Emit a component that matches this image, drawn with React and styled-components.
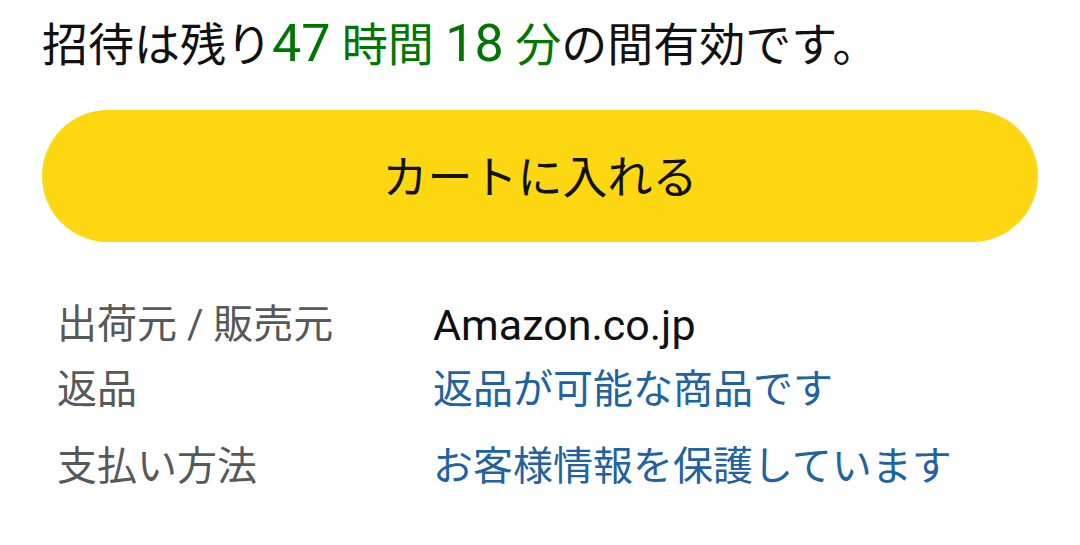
import React from "react";
import styled, { createGlobalStyle } from "styled-components";

const Global = createGlobalStyle`
  body{
    margin:0;
    background:#fff;
    font-family: Roboto, "Noto Sans CJK JP", sans-serif;
  }
`;

const App = () => {
  return (
    <Wrapper>
      <Global />
      <Notice>
        招待は残り<Green><Num>47</Num> 時間 <Num>18</Num> 分</Green>の間有効です。
      </Notice>
      <CartButton>カートに入れる</CartButton>
      <Details>
        <Row>
          <Label>出荷元 / 販売元</Label>
          <Value latin>Amazon.co.jp</Value>
        </Row>
        <Row>
          <Label>返品</Label>
          <Value link>返品が可能な商品です</Value>
        </Row>
        <Row extra>
          <Label>支払い方法</Label>
          <Value link>お客様情報を保護しています</Value>
        </Row>
      </Details>
    </Wrapper>
  );
};
export default App;

const Wrapper = styled.div`
  width:1080px;
  height:545px;
  padding:17px 42px 0 42px;
  box-sizing:border-box;
  overflow:hidden;
`;

const Notice = styled.p`
  margin:0;
  font-size:46px;
  line-height:56px;
  color:#111;
  white-space:nowrap;
`;

const Green = styled.span`
  color:#007600;
`;

const Num = styled.span`
  font-size:52px;
  line-height:0;
`;

const CartButton = styled.button`
  display:flex;
  align-items:center;
  justify-content:center;
  width:996px;
  height:132px;
  margin-top:37px;
  padding:0 0 4px 0;
  border:none;
  border-radius:66px;
  background:#fdd812;
  color:#111;
  font-family:inherit;
  font-size:45px;
  cursor:pointer;
`;

const Details = styled.div`
  margin-top:50px;
  padding-left:15px;
`;

const Row = styled.div`
  display:grid;
  grid-template-columns:376px 1fr;
  align-items:center;
  height:65px;
  margin-top:${p => (p.extra ? "12px" : "0")};
`;

const Label = styled.span`
  font-size:40px;
  line-height:50px;
  color:#565959;
`;

const Value = styled.span`
  font-size:${p => (p.latin ? "43px" : "40px")};
  line-height:50px;
  color:${p => (p.link ? "#2162a1" : "#0f1111")};
`;
